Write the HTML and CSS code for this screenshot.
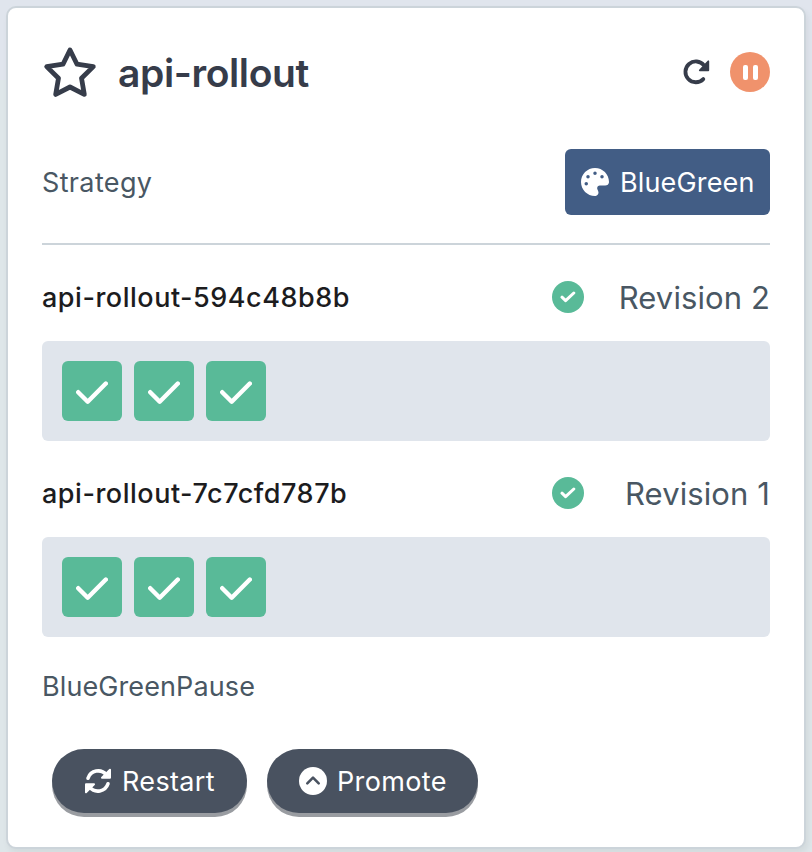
FILE: index.html
```html
<!DOCTYPE html>
<html lang="en">
<head>
<meta charset="utf-8">
<title>api-rollout</title>
<link rel="stylesheet" href="styles.css">
</head>
<body>
<svg class="defs" aria-hidden="true">
  <symbol id="check" viewBox="0 0 32 24"><path d="M2.200 11.200l9.500 9.500L29.800 2.500" fill="none" stroke="currentColor" stroke-width="4.400" stroke-linecap="round" stroke-linejoin="round"/></symbol>
  <symbol id="check-small" viewBox="0 0 16 12"><path d="M2 6.200l3.600 3.500L13.800 2" fill="none" stroke="currentColor" stroke-width="3" stroke-linecap="round" stroke-linejoin="round"/></symbol>
</svg>
<main class="card">
  <header class="head">
    <svg class="star" viewBox="0 0 54 54"><path d="M27 5l7 14.200 16.300 2.400L38.500 33.200l2.800 16.200L27 42l-14.300 7.400L15.500 33.200 3.700 21.600 20 19.200z" fill="none" stroke="currentColor" stroke-width="4.800" stroke-linejoin="round"/></svg>
    <h1 class="title">api-rollout</h1>
    <svg class="redo" viewBox="0 0 28 28"><path d="M21.300 21.100A10.400 10.400 0 1 1 22 7.400" fill="none" stroke="currentColor" stroke-width="3.800" stroke-linecap="round"/><path d="M26.300 3.300v9h-8.500z" fill="currentColor" stroke="currentColor" stroke-width="1.800" stroke-linejoin="round"/></svg>
    <span class="paused"><i></i><i></i></span>
  </header>
  <section class="strategy">
    <span class="label">Strategy</span>
    <span class="badge">
      <svg class="icon" viewBox="0 0 512 512"><path fill="currentColor" d="M512 256c0 .9 0 1.800 0 2.700c-.4 36.500-33.600 61.300-70.100 61.300H344c-26.500 0-48 21.500-48 48c0 3.400 .4 6.700 1 9.900c2.100 10.200 6.500 20 10.800 29.900c6.100 13.800 12.100 27.500 12.100 42c0 31.800-21.600 60.700-53.400 62c-3.500 .1-7 .2-10.600 .2C114.600 512 0 397.400 0 256S114.600 0 256 0S512 114.600 512 256zM128 288a32 32 0 1 0-64 0 32 32 0 1 0 64 0zm0-96a32 32 0 1 0 0-64 32 32 0 1 0 0 64zM288 96a32 32 0 1 0-64 0 32 32 0 1 0 64 0zm96 96a32 32 0 1 0 0-64 32 32 0 1 0 0 64z"/></svg>
      <span>BlueGreen</span>
    </span>
  </section>
  <section class="replica">
    <div class="replica-head">
      <span class="name">api-rollout-594c48b8b</span>
      <span class="healthy"><svg><use href="#check-small"/></svg></span>
      <span class="revision">Revision 2</span>
    </div>
    <div class="pods">
      <span class="pod"><svg><use href="#check"/></svg></span>
      <span class="pod"><svg><use href="#check"/></svg></span>
      <span class="pod"><svg><use href="#check"/></svg></span>
    </div>
  </section>
  <section class="replica">
    <div class="replica-head">
      <span class="name">api-rollout-7c7cfd787b</span>
      <span class="healthy"><svg><use href="#check-small"/></svg></span>
      <span class="revision">Revision 1</span>
    </div>
    <div class="pods">
      <span class="pod"><svg><use href="#check"/></svg></span>
      <span class="pod"><svg><use href="#check"/></svg></span>
      <span class="pod"><svg><use href="#check"/></svg></span>
    </div>
  </section>
  <p class="message">BlueGreenPause</p>
  <footer class="actions">
    <button class="btn restart">
      <svg class="icon" viewBox="0 0 28 28"><g id="turn"><path d="M4 11.200A10.600 10.600 0 0 1 22.300 7.800" fill="none" stroke="currentColor" stroke-width="3.600" stroke-linecap="round"/><path d="M26 2.800v8h-8z" fill="currentColor" stroke="currentColor" stroke-width="2" stroke-linejoin="round"/></g><use href="#turn" transform="rotate(180 14 14)"/></svg>
      <span>Restart</span>
    </button>
    <button class="btn promote">
      <svg class="icon" viewBox="0 0 28 28"><circle cx="14" cy="14" r="14" fill="currentColor"/><path d="M8.300 16.300L14 10.600l5.700 5.700" fill="none" stroke="#495260" stroke-width="2.600" stroke-linecap="round" stroke-linejoin="round"/></svg>
      <span>Promote</span>
    </button>
  </footer>
</main>
</body>
</html>
```

FILE: styles.css
```css
* { box-sizing: border-box; }
body {
  margin: 0;
  height: 852px;
  padding: 6px;
  overflow: hidden;
  background: linear-gradient(#e0e5ed 80px, #dee6e9 80px);
  font-family: Inter, "Liberation Sans", sans-serif;
  color: #495763;
}
svg { display: block; flex: none; }
.defs { position: absolute; width: 0; height: 0; }
.card {
  width: 800px;
  height: 843px;
  padding: 34px;
  border: 2px solid #ccd4da;
  border-radius: 10px;
  background: #fff;
  box-shadow: 2px 4px 6px rgba(0, 0, 0, .06);
}
.head { display: flex; align-items: center; height: 60px; color: #363c4a; }
.star { width: 54px; height: 54px; margin-left: 1px; }
.title { flex: 1; margin: 2px 0 0 21px; font-size: 39px; line-height: 48px; font-weight: 600; letter-spacing: -.4px; }
.redo { width: 28px; height: 28px; margin-right: 20px; }
.paused { display: flex; justify-content: center; align-items: center; gap: 5px; width: 40px; height: 40px; border-radius: 50%; background: #f0926c; }
.paused i { width: 5px; height: 15px; border-radius: 2px; background: #fff; }
.strategy { display: flex; justify-content: space-between; align-items: center; height: 143px; padding: 47px 0 28px; margin-bottom: 25px; border-bottom: 2px solid #ccd4da; }
.label, .badge, .message { font-size: 27px; }
.label { letter-spacing: .35px; }
.badge { display: flex; align-items: center; width: 205px; height: 66px; padding-left: 16px; border-radius: 6px; background: #425d85; color: #fff; gap: 11px; letter-spacing: .15px; }
.icon { width: 28px; height: 28px; }
.replica { margin-bottom: 25px; }
.replica-head { display: flex; align-items: center; height: 54px; margin-bottom: 17px; }
.name { flex: 1; font-size: 27px; font-weight: 500; letter-spacing: .52px; color: #1c1c1e; }
.healthy { display: flex; justify-content: center; align-items: center; width: 32px; height: 32px; border-radius: 50%; background: #59ba98; color: #fff; }
.healthy svg { width: 16px; height: 12px; }
.revision { width: 186px; text-align: right; font-size: 31px; letter-spacing: .1px; }
.pods { display: flex; gap: 12px; height: 100px; padding: 20px; border-radius: 6px; background: #e0e5ec; }
.pod { display: flex; justify-content: center; align-items: center; width: 60px; height: 60px; padding-top: 4px; border-radius: 6px; background: #59ba98; color: #fff; }
.pod svg { width: 32px; height: 24px; }
.message { margin: 26px 0 0; height: 48px; line-height: 48px; letter-spacing: .1px; }
.actions { display: flex; gap: 20px; padding: 38px 10px 0; }
.btn { display: flex; align-items: center; gap: 10px; height: 64px; padding: 0 0 0 32px; border: 0; border-radius: 32px; background: #495260; color: #fff; font: 27px Inter, sans-serif; letter-spacing: .35px; box-shadow: 0 4px 0 #999ca1; }
.restart { width: 195px; }
.promote { width: 211px; }
```
